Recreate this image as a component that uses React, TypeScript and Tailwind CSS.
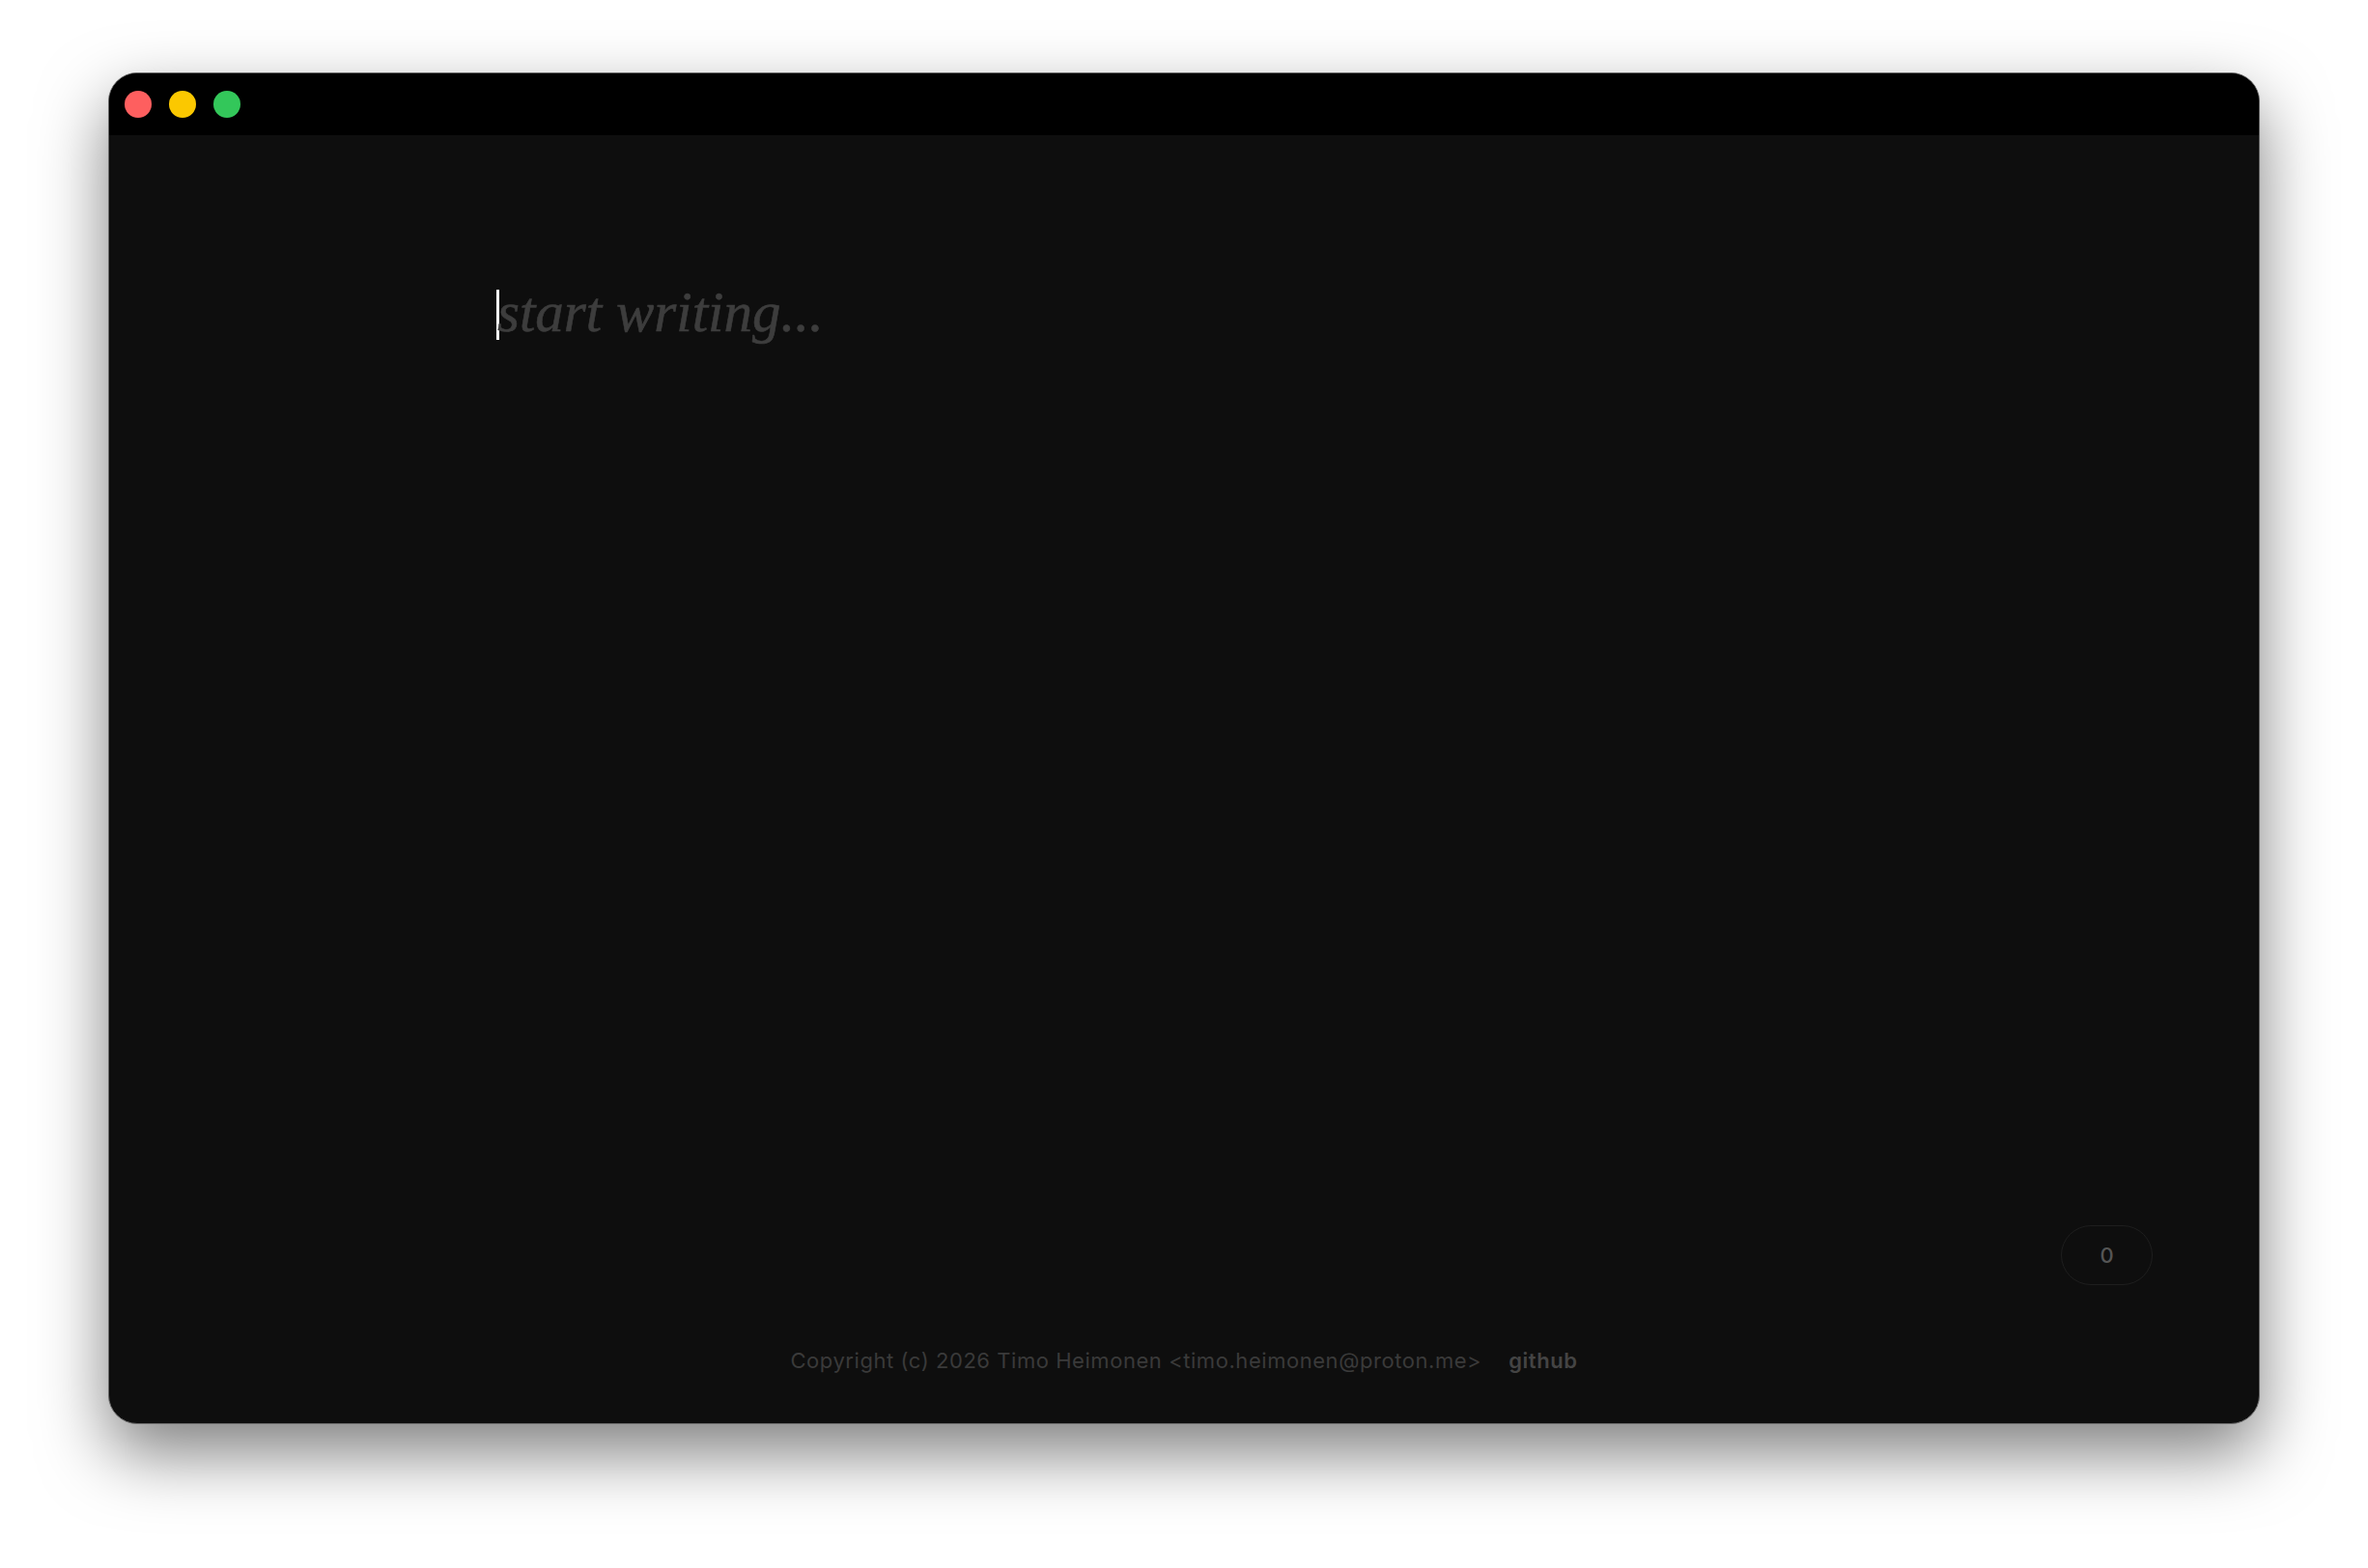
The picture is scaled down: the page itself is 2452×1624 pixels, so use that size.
export default function App() {
  return (
    <div className="min-h-screen w-full bg-white flex justify-center pt-[75px] pb-[148px]">
      <div className="w-[2228px] h-[1400px] flex flex-col overflow-hidden rounded-[30px] border border-[#6b6b6b] bg-[#0e0e0e] shadow-[0_30px_70px_rgba(0,0,0,0.5)]">
        <TitleBar />
        <div className="flex-1 flex flex-col">
          <Editor />
          <div className="flex justify-end pr-[110px]">
            <WordCount value={0} />
          </div>
          <Footer />
        </div>
      </div>
    </div>
  );
}

function TitleBar() {
  return (
    <div className="h-[64px] shrink-0 bg-black flex items-center gap-[18px] pl-[16px]">
      <span className="w-[28px] h-[28px] rounded-full bg-[#fe5f5f]" />
      <span className="w-[28px] h-[28px] rounded-full bg-[#fbc800]" />
      <span className="w-[28px] h-[28px] rounded-full bg-[#33c75a]" />
    </div>
  );
}

function Editor() {
  return (
    <div className="flex-1 pl-[401px] pt-[154px]">
      <div className="flex items-start">
        <span className="mt-[6px] w-[3px] h-[52px] bg-white shrink-0" />
        <span
          className="-ml-[2px] text-[59px] leading-none italic text-[#3d3d3d] [-webkit-text-stroke:0.6px_#3d3d3d]"
          style={{ fontFamily: '"Liberation Serif", Georgia, serif' }}
        >
          start writing...
        </span>
      </div>
    </div>
  );
}

function WordCount({ value }: { value: number }) {
  return (
    <div
      className="w-[95px] h-[62px] rounded-full border border-[#1e1e1e] flex items-center justify-center text-[22px] font-medium text-[#555555]"
      style={{ fontFamily: "Inter, sans-serif" }}
    >
      {value}
    </div>
  );
}

function Footer() {
  return (
    <div
      className="mt-[63px] mb-[50px] h-[30px] flex items-center justify-center gap-[28px] text-[22px] tracking-[0.55px] text-[#3a3a3a]"
      style={{ fontFamily: "Inter, sans-serif" }}
    >
      <span>Copyright (c) 2026 Timo Heimonen &lt;timo.heimonen@proton.me&gt;</span>
      <a className="font-semibold text-[#444444]" href="#">
        github
      </a>
    </div>
  );
}
